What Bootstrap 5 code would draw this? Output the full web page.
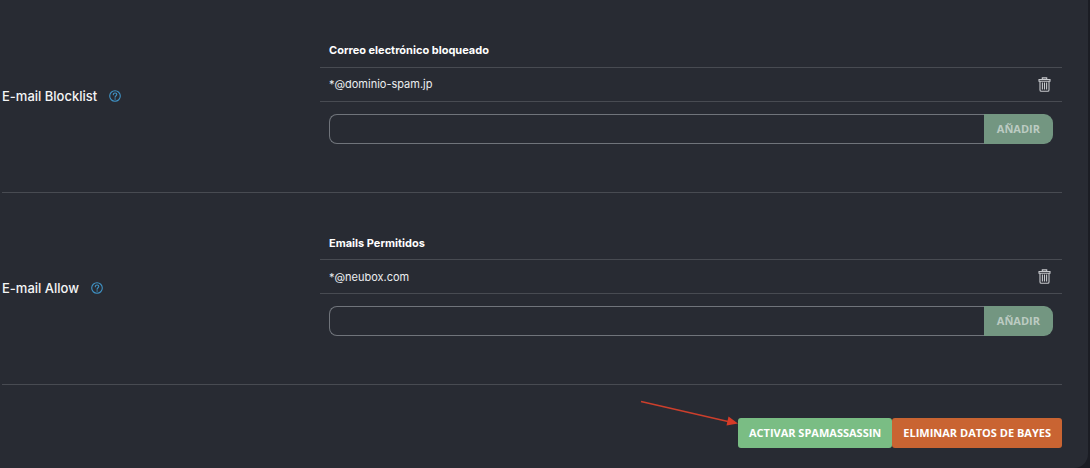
<!DOCTYPE html>
<html lang="es" data-bs-theme="dark">
<head>
<meta charset="utf-8">
<meta name="viewport" content="width=device-width, initial-scale=1">
<title>SpamAssassin</title>
<link href="https://cdn.jsdelivr.net/npm/bootstrap@5.3.0/dist/css/bootstrap.min.css" rel="stylesheet">
<style>
body { background: #1b1d24; font-family: Inter, "Open Sans", sans-serif; font-size: 11px; line-height: 16px; color: #fff; overflow-x: hidden; }
.panel { background: #282b33; margin-right: 2px; padding: 0 26px 20px 2px; border-radius: 0 0 14px 0; }
.setting { border-bottom: 1px solid #484b52; padding: 34px 0; }
.setting-name { flex: 0 0 30%; gap: 12px; font-size: 13px; font-weight: 500; color: #f4f5f6; }
.help { color: #3f93c6; }
.help svg, .trash svg { display: block; }
.mail-table { --bs-table-bg: transparent; --bs-table-color: #fff; border-color: #484b52; }
.mail-table th, .mail-table td { height: 34px; padding: 0 9px; vertical-align: middle; }
.mail-table th { height: 33px; font-weight: 700; }
.mail-table td { color: #eceef0; }
.trash { color: #c6c8cc; border: 0; padding: 0 2px; }
.add-row { padding: 12px 9px 14px; }
.add-row .form-control { height: 30px; min-height: 0; background: transparent; border: 1px solid #70747b; border-right: 0; border-radius: 8px 0 0 8px; font-size: 11px; color: #fff; }
.action { font-family: "Open Sans", sans-serif; font-size: 11px; font-weight: 700; line-height: 16px; height: 30px; padding: 0 11px; border: 0; border-radius: 3px; color: #fff; white-space: nowrap; }
.action:hover { color: #fff; }
.add { background: #739681; color: #bccbc2; border-radius: 0 9px 9px 0; padding: 0 13px; }
.activate { background: #7abd84; }
.delete { background: #c96432; }
.actions { padding-top: 33px; }
.pointer { position: absolute; right: 100%; top: -18px; }
</style>
<script src="https://cdn.jsdelivr.net/npm/bootstrap@5.3.0/dist/js/bootstrap.bundle.min.js"></script>
</head>
<body>
<svg class="d-none" aria-hidden="true">
  <symbol id="i-help" viewBox="0 0 12 12"><g fill="none" stroke="currentColor" stroke-width="1.1"><circle cx="6" cy="6" r="5.3"/><path d="M4.3 4.8C4.3 2.3 7.8 2.5 7.8 4.6C7.8 5.8 6.1 5.8 6.1 7.3" stroke-linecap="round"/></g><circle cx="6.1" cy="9" r=".7" fill="currentColor"/></symbol>
  <symbol id="i-trash" viewBox="0 0 13 15"><g fill="none" stroke="currentColor" stroke-width="1.1"><path d="M4.3 2.3V.9h4.4v1.4M1 2.5h11v1.7H1zM2 4.3v8.6q0 1.3 1.3 1.3h6.4q1.3 0 1.3-1.3V4.3M4.4 5.6v7M6.5 5.6v7M8.6 5.6v7"/></g></symbol>
</svg>
<main class="panel">
  <section class="setting d-flex align-items-center">
    <div class="setting-name d-flex align-items-center"><label for="block-input">E-mail Blocklist</label><a class="help" href="#" aria-label="Ayuda"><svg width="12" height="12"><use href="#i-help"/></svg></a></div>
    <div class="flex-fill">
      <table class="table mail-table mb-0">
        <thead><tr><th colspan="2" scope="col">Correo electrónico bloqueado</th></tr></thead>
        <tbody><tr><td>*@dominio-spam.jp</td><td><button class="btn trash d-block ms-auto" type="button" aria-label="Eliminar"><svg width="13" height="15"><use href="#i-trash"/></svg></button></td></tr></tbody>
      </table>
      <div class="add-row d-flex"><input class="form-control" id="block-input" type="text"><button class="btn action add" type="button">AÑADIR</button></div>
    </div>
  </section>
  <section class="setting d-flex align-items-center">
    <div class="setting-name d-flex align-items-center"><label for="allow-input">E-mail Allow</label><a class="help" href="#" aria-label="Ayuda"><svg width="12" height="12"><use href="#i-help"/></svg></a></div>
    <div class="flex-fill">
      <table class="table mail-table mb-0">
        <thead><tr><th colspan="2" scope="col">Emails Permitidos</th></tr></thead>
        <tbody><tr><td>*@neubox.com</td><td><button class="btn trash d-block ms-auto" type="button" aria-label="Eliminar"><svg width="13" height="15"><use href="#i-trash"/></svg></button></td></tr></tbody>
      </table>
      <div class="add-row d-flex"><input class="form-control" id="allow-input" type="text"><button class="btn action add" type="button">AÑADIR</button></div>
    </div>
  </section>
  <div class="actions d-flex justify-content-end">
    <div class="position-relative d-flex">
      <svg class="pointer" width="98" height="28" viewBox="0 0 98 28" aria-hidden="true"><path d="M1 1.5L88 21.5" stroke="#cc3f2c" stroke-width="1.5"/><path d="M98 23.5L86.5 25.5L88.5 16.5Z" fill="#d63b27"/></svg>
      <button class="btn action activate" type="button">ACTIVAR SPAMASSASSIN</button><button class="btn action delete" type="button">ELIMINAR DATOS DE BAYES</button>
    </div>
  </div>
</main>
</body>
</html>
